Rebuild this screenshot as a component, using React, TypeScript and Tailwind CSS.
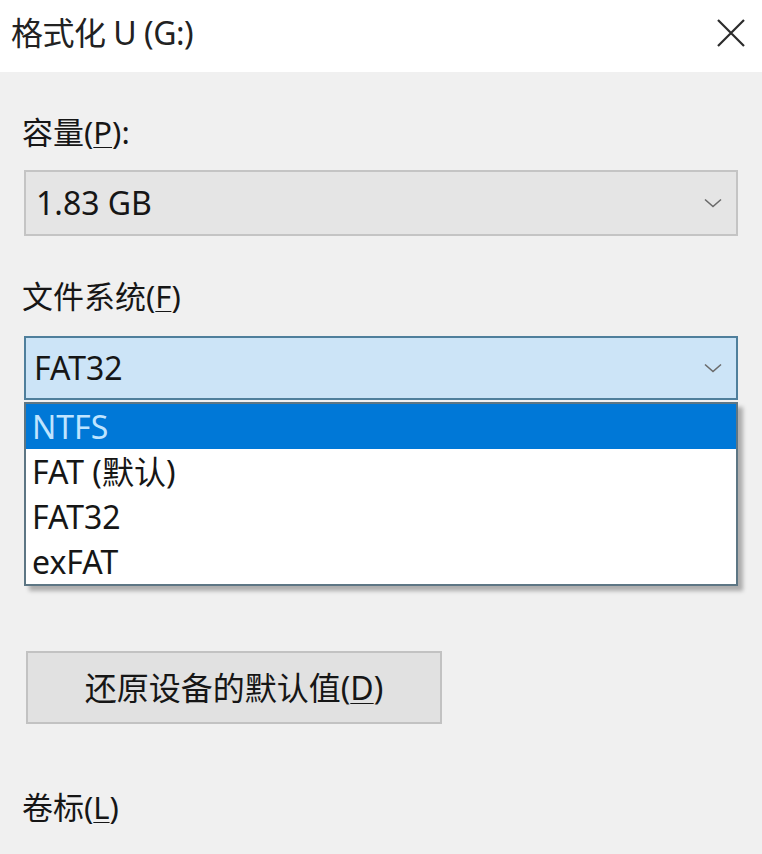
import type { ReactNode } from "react";

const FONT = '"Noto Sans", "Noto Sans CJK SC", sans-serif';

function Chevron() {
  return (
    <svg width="18" height="10" viewBox="0 0 18 10" className="shrink-0">
      <path d="M1 1.5 L9 8.5 L17 1.5" fill="none" stroke="#6a6a6a" strokeWidth="1.6" />
    </svg>
  );
}

function Mn({ children }: { children: ReactNode }) {
  return <span className="underline underline-offset-[3px] decoration-1">{children}</span>;
}

const options = ["NTFS", "FAT (默认)", "FAT32", "exFAT"];

export default function App() {
  return (
    <div className="w-[762px] h-[854px] overflow-hidden bg-[#f0f0f0] text-[#161616]" style={{ fontFamily: FONT }}>
      {/* title bar */}
      <div className="h-[72px] bg-white flex items-center justify-between pl-[11px] pr-[15px]">
        <span className="text-[32px] leading-none text-[#222] -mt-[6px] tracking-[-0.5px]">格式化 U (G:)</span>
        <svg width="32" height="32" viewBox="0 0 32 32" className="-mt-[6px]">
          <path d="M3 3 L29 29 M29 3 L3 29" stroke="#2b2b2b" strokeWidth="2.2" />
        </svg>
      </div>

      <div className="px-[24px] pt-[42px]">
        <div className="text-[31px] leading-[36px] -ml-[2px]">
          容量(<Mn>P</Mn>):
        </div>

        <div className="mt-[20px] h-[66px] bg-[#e5e5e5] border-2 border-[#c4c4c4] flex items-center justify-between pl-[10px] pr-[14px]">
          <span className="text-[32px]">1.83 GB</span>
          <Chevron />
        </div>

        <div className="mt-[42px] text-[31px] leading-[36px] -ml-[2px]">
          文件系统(<Mn>F</Mn>)
        </div>

        <div className="relative mt-[22px]">
          <div className="h-[64px] bg-[#cce4f7] border-2 border-[#4f7f9c] flex items-center justify-between pl-[8px] pr-[14px]">
            <span className="text-[32px]">FAT32</span>
            <Chevron />
          </div>

          {/* open list */}
          <div className="absolute left-0 top-[66px] w-[714px] bg-white border-2 border-[#5d7684] shadow-[5px_5px_4px_rgba(0,0,0,0.28)]">
            {options.map((o, i) => (
              <div
                key={o}
                className={
                  i === 0
                    ? "h-[45px] flex items-center pl-[6px] bg-[#0078d7] text-[#bfe4ff] text-[32px]"
                    : "h-[45px] flex items-center pl-[6px] text-[32px]"
                }
              >
                {o}
              </div>
            ))}
          </div>
        </div>

        <div className="mt-[251px] ml-[2px] w-[416px] h-[73px] bg-[#e1e1e1] border-2 border-[#c2c2c2] flex items-center justify-center text-[32px]">
          还原设备的默认值(<Mn>D</Mn>)
        </div>

        <div className="mt-[65px] text-[31px] leading-[36px] -ml-[2px]">
          卷标(<Mn>L</Mn>)
        </div>
      </div>
    </div>
  );
}
